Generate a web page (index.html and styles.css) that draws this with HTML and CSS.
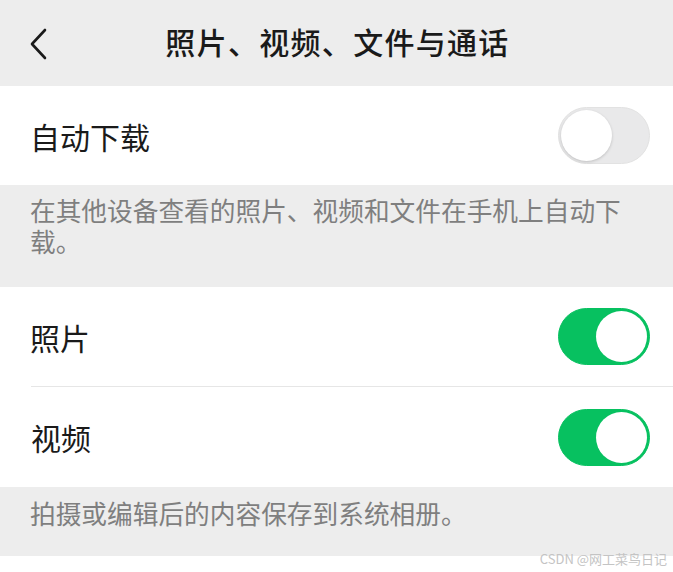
FILE: index.html
```html
<!DOCTYPE html>
<html lang="zh-CN">
<head>
    <meta charset="UTF-8">
    <meta name="viewport" content="width=device-width, initial-scale=1.0">
    <title>照片、视频、文件与通话</title>
    <link rel="stylesheet" href="styles.css">
</head>
<body>

    <div class="header">
        <span class="back">
            <svg width="20" height="32" viewBox="0 0 20 32">
                <polyline points="16,2 3,16 16,30" fill="none" stroke="#1a1a1a" stroke-width="2.6" stroke-linecap="round" stroke-linejoin="round"/>
            </svg>
        </span>
        <h1>照片、视频、文件与通话</h1>
    </div>

    <div class="group">
        <div class="row">
            <span class="label">自动下载</span>
            <span class="switch"><span class="knob"></span></span>
        </div>
    </div>
    <p class="tip tip-first">在其他设备查看的照片、视频和文件在手机上自动下载。</p>

    <div class="group">
        <div class="row">
            <span class="label">照片</span>
            <span class="switch on"><span class="knob"></span></span>
        </div>
        <div class="row line">
            <span class="label">视频</span>
            <span class="switch on"><span class="knob"></span></span>
        </div>
    </div>
    <p class="tip tip-last">拍摄或编辑后的内容保存到系统相册。</p>

    <div class="mark">CSDN @网工菜鸟日记</div>

</body>
</html>
```

FILE: styles.css
```css
body {
    margin: 0;
    background: #fff;
    font-family: "Noto Sans CJK SC", "Noto Sans", sans-serif;
    color: #1a1a1a;
    height: 572px;
    overflow: hidden;
    position: relative;
}
.header {
    height: 86px;
    background: #ededed;
    display: flex;
    align-items: center;
    justify-content: center;
    position: relative;
}
.back {
    position: absolute;
    left: 29px;
    top: 28px;
    height: 32px;
}
h1 {
    margin: 0 0 4px 2px;
    font-size: 30px;
    font-weight: 500;
    letter-spacing: 1.3px;
}
.group {
    background: #fff;
}
.row {
    height: 99px;
    display: flex;
    align-items: center;
    justify-content: space-between;
    padding: 0 23px 0 30px;
}
.row.line {
    height: 100px;
    border-top: 1px solid #e6e6e6;
    margin-left: 31px;
    padding-left: 0;
}
.label {
    font-size: 30px;
}
.switch {
    width: 92px;
    height: 57px;
    border-radius: 29px;
    background: #e9e9ea;
    box-sizing: border-box;
    border: 1px solid #e2e2e2;
    position: relative;
}
.knob {
    position: absolute;
    left: 2px;
    top: 2px;
    width: 51px;
    height: 51px;
    border-radius: 50%;
    background: #fff;
    box-shadow: 0 1px 3px rgba(0, 0, 0, 0.18);
}
.switch.on {
    background: #07c160;
    border-color: #07c160;
}
.switch.on .knob {
    left: auto;
    right: 2px;
    box-shadow: none;
}
.tip {
    margin: 0;
    background: #ededed;
    color: #7f7f7f;
    font-size: 25.7px;
    line-height: 31px;
    padding: 0 30px;
}
.tip-first {
    height: 102px;
    padding-top: 9px;
    box-sizing: border-box;
}
.tip-last {
    height: 69px;
    padding-top: 10px;
    box-sizing: border-box;
}
.mark {
    position: absolute;
    right: 6px;
    bottom: 4px;
    font-size: 13px;
    color: #c4c4c4;
}
```
